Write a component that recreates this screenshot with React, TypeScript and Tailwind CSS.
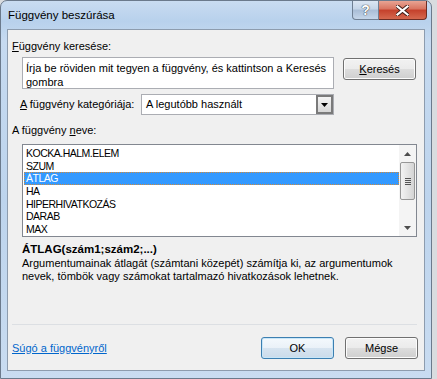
import React from "react";

const items = ["KOCKA.HALM.ELEM", "SZUM", "ÁTLAG", "HA", "HIPERHIVATKOZÁS", "DARAB", "MAX"];

function WinButton({ children, isDefault }: { children: React.ReactNode; isDefault?: boolean }) {
  return (
    <button
      className={
        "w-[73px] h-[22px] rounded-[3px] border text-[11px] text-black flex items-center justify-center " +
        (isDefault
          ? "border-[#3c7fb1] bg-[linear-gradient(#f4f9fd_0%,#eaf1f8_50%,#d7e4f0_50%,#cbdbea_100%)] shadow-[inset_0_0_0_1px_#c8e6f8]"
          : "border-[#707070] bg-[linear-gradient(#f2f2f2_0%,#ebebeb_50%,#dddddd_50%,#cfcfcf_100%)] shadow-[inset_0_0_0_1px_#fcfcfc]")
      }
    >
      {children}
    </button>
  );
}

export default function App() {
  const selected = 2;
  return (
    <div className="w-[437px] h-[379px] bg-[#d9dcdf] overflow-hidden font-['Liberation_Sans',sans-serif]">
      <div className="w-[432px] h-[379px] rounded-t-[7px] border border-[#6b7a8c] bg-[linear-gradient(180deg,#c9dcf1_0px,#b8d1ec_20px,#c6daf0_40px,#bdd4ed_200px,#c9dcf1_379px)] flex flex-col">
        {/* Title bar */}
        <div className="h-[28px] flex items-start shrink-0">
          <div className="pl-[7px] pt-[6px] text-[11.5px] text-black">Függvény beszúrása</div>
          <div className="ml-auto mr-[4px] flex">
            <div className="w-[27px] h-[19px] rounded-bl-[4px] border border-t-0 border-[#6f7f93] bg-[linear-gradient(#dbe6f3_0%,#c5d5e8_45%,#a9bdd6_50%,#c5d6ea_100%)] flex items-center justify-center text-white font-bold text-[14px] [text-shadow:0_0_1px_#333,0_0_1px_#333]">
              ?
            </div>
            <div className="w-[48px] h-[19px] rounded-br-[4px] border border-l-0 border-t-0 border-[#6d2d24] bg-[linear-gradient(#e8a493_0%,#d8735f_45%,#c4402b_50%,#d5694f_100%)] flex items-center justify-center">
              <svg width="13" height="11" viewBox="0 0 13 11">
                <path d="M1.5 1.5 L11.5 9.5 M11.5 1.5 L1.5 9.5" stroke="#3a1a14" strokeWidth="4" strokeLinecap="square" />
                <path d="M1.5 1.5 L11.5 9.5 M11.5 1.5 L1.5 9.5" stroke="#ffffff" strokeWidth="2.2" strokeLinecap="square" />
              </svg>
            </div>
          </div>
        </div>

        {/* Client area */}
        <div className="mx-[6px] mb-[7px] flex-1 border border-[#8d9cae] bg-[#f0f0f0] flex flex-col text-[11px] text-black">
          <div className="mt-[9px] ml-[4px] h-[14px] leading-[14px]">
            <span className="underline">F</span>üggvény keresése:
          </div>
          <div className="mt-[4px] flex items-start">
            <div className="ml-[14px] w-[312px] h-[32px] border border-[#abadb3] bg-white px-[3px] pt-[3px] leading-[14px]">
              Írja be röviden mit tegyen a függvény, és kattintson a Keresés gombra
            </div>
            <div className="ml-[9px] mt-[1px]">
              <WinButton>
                <span className="underline">K</span>eresés
              </WinButton>
            </div>
          </div>
          <div className="mt-[5px] flex items-center">
            <div className="ml-[12px] w-[121px]">
              <span className="underline">A</span> függvény kategóriája:
            </div>
            <div className="w-[193px] h-[21px] border border-[#abadb3] bg-white flex items-center">
              <div className="pl-[4px] flex-1">A legutóbb használt</div>
              <div className="w-[17px] h-[19px] border-2 border-[#7a7a7a] bg-[linear-gradient(#f4f4f4,#d6d6d6)] flex items-center justify-center">
                <svg width="7" height="4" viewBox="0 0 7 4">
                  <path d="M0 0 H7 L3.5 4 Z" fill="#000" />
                </svg>
              </div>
            </div>
          </div>
          <div className="mt-[8px] ml-[4px] h-[14px] leading-[14px]">
            A függvény <span className="underline">n</span>eve:
          </div>
          <div className="mt-[7px] ml-[14px] w-[395px] h-[93px] border border-[#828790] bg-white flex">
            <div className="flex-1 pt-[2px] pl-[1px]">
              {items.map((it, i) => (
                <div
                  key={it}
                  className={
                    "h-[12.7px] leading-[12.7px] pl-[2px] text-[10.5px] tracking-[-0.5px] " +
                    (i === selected ? "bg-[#3399ff] text-white outline-1 outline-dotted outline-[#d08a3c] -outline-offset-1" : "")
                  }
                >
                  {it}
                </div>
              ))}
            </div>
            <div className="w-[17px] bg-[#f4f4f4] flex flex-col items-center">
              <div className="h-[17px] flex items-center justify-center">
                <svg width="7" height="4" viewBox="0 0 7 4">
                  <path d="M3.5 0 L7 4 H0 Z" fill="#4d4d4d" />
                </svg>
              </div>
              <div className="w-[15px] h-[38px] rounded-[2px] border border-[#979797] bg-[linear-gradient(90deg,#f3f3f3,#e4e4e4_50%,#d4d4d4)] flex flex-col items-center justify-center gap-[1px]">
                <div className="w-[6px] h-[1px] bg-[#555]" />
                <div className="w-[6px] h-[1px] bg-[#555]" />
                <div className="w-[6px] h-[1px] bg-[#555]" />
                <div className="w-[6px] h-[1px] bg-[#555]" />
              </div>
              <div className="flex-1" />
              <div className="h-[17px] flex items-center justify-center">
                <svg width="7" height="4" viewBox="0 0 7 4">
                  <path d="M0 0 H7 L3.5 4 Z" fill="#4d4d4d" />
                </svg>
              </div>
            </div>
          </div>
          <div className="mt-[5px] ml-[14px] h-[14px] leading-[14px] font-bold text-[11.5px]">ÁTLAG(szám1;szám2;...)</div>
          <div className="mt-[1px] ml-[14px] w-[385px] leading-[13px]">
            Argumentumainak átlagát (számtani közepét) számítja ki, az argumentumok nevek, tömbök vagy számokat tartalmazó hivatkozások lehetnek.
          </div>
          <div className="mt-[41px] ml-[4px] w-[405px] h-[1px] bg-[#dcdfe3]" />
          <div className="mt-[12px] flex items-center">
            <div className="ml-[4px] text-[#0066cc] underline">Súgó a függvényről</div>
            <div className="ml-auto flex gap-[11px] mr-[6px]">
              <WinButton isDefault>OK</WinButton>
              <WinButton>Mégse</WinButton>
            </div>
          </div>
        </div>
      </div>
    </div>
  );
}
